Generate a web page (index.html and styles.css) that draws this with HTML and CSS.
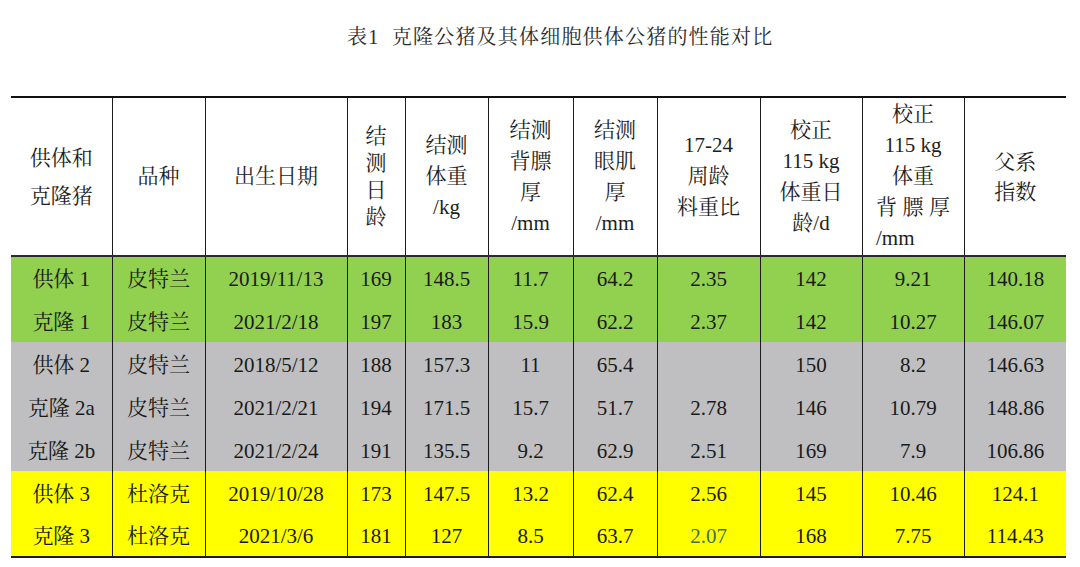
FILE: index.html
```html
<!DOCTYPE html>
<html lang="zh-CN">
<head>
<meta charset="utf-8">
<title>表1 克隆公猪及其体细胞供体公猪的性能对比</title>
<link rel="stylesheet" href="styles.css">
</head>
<body>
<div class="page">
  <h1 class="title">表1&nbsp; 克隆公猪及其体细胞供体公猪的性能对比</h1>
  <table class="data">
    <colgroup>
      <col class="w101"><col class="w93"><col class="w142"><col class="w58"><col class="w83"><col class="w85"><col class="w84"><col class="w103"><col class="w102"><col class="w102"><col class="w102">
    </colgroup>
    <thead>
      <tr>
        <th class="lh38">供体和<br>克隆猪</th>
        <th>品种</th>
        <th>出生日期</th>
        <th class="lh27">结<br>测<br>日<br>龄</th>
        <th class="lh31">结测<br>体重<br>/kg</th>
        <th class="lh31">结测<br>背膘<br>厚<br>/mm</th>
        <th class="lh31">结测<br>眼肌<br>厚<br>/mm</th>
        <th class="lh31">17-24<br>周龄<br>料重比</th>
        <th class="lh31">校正<br>115 kg<br>体重日<br>龄/d</th>
        <th class="lh31">
          <div class="stack">
            <div class="mid">校正</div>
            <div class="mid">115 kg</div>
            <div class="mid">体重</div>
            <div class="just">背膘厚</div>
            <div class="left">/mm</div>
          </div>
        </th>
        <th class="lh30">父系<br>指数</th>
      </tr>
    </thead>
    <tbody>
      <tr class="green">
        <td>供体 1</td><td>皮特兰</td><td>2019/11/13</td><td>169</td><td>148.5</td><td>11.7</td><td>64.2</td><td>2.35</td><td>142</td><td>9.21</td><td>140.18</td>
      </tr>
      <tr class="green">
        <td>克隆 1</td><td>皮特兰</td><td>2021/2/18</td><td>197</td><td>183</td><td>15.9</td><td>62.2</td><td>2.37</td><td>142</td><td>10.27</td><td>146.07</td>
      </tr>
      <tr class="grey">
        <td>供体 2</td><td>皮特兰</td><td>2018/5/12</td><td>188</td><td>157.3</td><td>11</td><td>65.4</td><td></td><td>150</td><td>8.2</td><td>146.63</td>
      </tr>
      <tr class="grey">
        <td>克隆 2a</td><td>皮特兰</td><td>2021/2/21</td><td>194</td><td>171.5</td><td>15.7</td><td>51.7</td><td>2.78</td><td>146</td><td>10.79</td><td>148.86</td>
      </tr>
      <tr class="grey">
        <td>克隆 2b</td><td>皮特兰</td><td>2021/2/24</td><td>191</td><td>135.5</td><td>9.2</td><td>62.9</td><td>2.51</td><td>169</td><td>7.9</td><td>106.86</td>
      </tr>
      <tr class="yellow">
        <td>供体 3</td><td>杜洛克</td><td>2019/10/28</td><td>173</td><td>147.5</td><td>13.2</td><td>62.4</td><td>2.56</td><td>145</td><td>10.46</td><td>124.1</td>
      </tr>
      <tr class="yellow last">
        <td>克隆 3</td><td>杜洛克</td><td>2021/3/6</td><td>181</td><td>127</td><td>8.5</td><td>63.7</td><td class="teal">2.07</td><td>168</td><td>7.75</td><td>114.43</td>
      </tr>
    </tbody>
  </table>
</div>
</body>
</html>
```

FILE: styles.css
```css
html, body {
  margin: 0;
  padding: 0;
  background: #ffffff;
}

body {
  font-family: "Liberation Serif", "Noto Serif CJK SC", "Noto Sans CJK SC", serif;
  color: #1a1a1a;
}

.page {
  width: 1080px;
  height: 567px;
  overflow: hidden;
  padding: 0 0 0 11px;
  box-sizing: border-box;
}

.title {
  margin: 0;
  height: 96px;
  padding: 23px 0 0 336px;
  box-sizing: border-box;
  font-size: 20px;
  font-weight: normal;
  line-height: 28px;
  letter-spacing: 1.2px;
  color: #2b2b2b;
  white-space: nowrap;
}

.data {
  border-collapse: collapse;
  table-layout: fixed;
  width: 1055px;
  font-size: 21px;
}

.w101 { width: 101px; }
.w93 { width: 93px; }
.w142 { width: 142px; }
.w58 { width: 58px; }
.w83 { width: 83px; }
.w85 { width: 85px; }
.w84 { width: 84px; }
.w103 { width: 103px; }
.w102 { width: 102px; }

.data th,
.data td {
  padding: 0;
  text-align: center;
  vertical-align: middle;
  font-weight: normal;
  border-left: 1px solid #1c1c1c;
  white-space: nowrap;
}

.data th:first-child,
.data td:first-child {
  border-left: none;
}

.data thead tr {
  height: 159px;
}

.data thead th {
  border-top: 2px solid #111111;
  border-bottom: 2px solid #2a2a2a;
  line-height: 31px;
  color: #1e1e1e;
}

.data thead th.lh38 { line-height: 38px; }
.data thead th.lh27 { line-height: 27px; }
.data thead th.lh31 { line-height: 31px; }
.data thead th.lh30 { line-height: 30px; }

.stack {
  display: inline-block;
  width: 74px;
  text-align: left;
  vertical-align: middle;
}

.stack .mid {
  text-align: center;
}

.stack .just {
  text-align: justify;
  text-align-last: justify;
}

.stack .left {
  text-align: left;
}

.data tbody tr {
  height: 43px;
}

.data tbody td {
  line-height: 24px;
  padding-top: 2px;
}

.green td { background: #92d050; }
.grey td { background: #bfbfc1; }
.yellow td { background: #ffff00; }

.last td {
  border-bottom: 2px solid #1c1c1c;
}

.data td.teal {
  color: #3f6f63;
}
```
